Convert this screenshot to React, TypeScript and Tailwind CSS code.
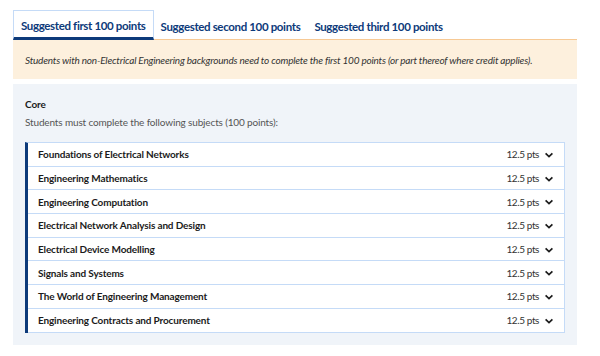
import React from "react";

const subjects = [
  "Foundations of Electrical Networks",
  "Engineering Mathematics",
  "Engineering Computation",
  "Electrical Network Analysis and Design",
  "Electrical Device Modelling",
  "Signals and Systems",
  "The World of Engineering Management",
  "Engineering Contracts and Procurement",
];

function Chevron() {
  return (
    <svg width="10" height="10" viewBox="0 0 10 10" className="ml-[5px]">
      <path d="M1.6 3.4 L5 6.6 L8.4 3.4" fill="none" stroke="#1b1b1b" strokeWidth="1.7" />
    </svg>
  );
}

export default function App() {
  return (
    <div className="w-[600px] h-[356px] bg-white" style={{ fontFamily: '"Lato", "Liberation Sans", sans-serif' }}>
      <div className="pl-[13px] pt-[10px] w-[577px]">
        <div className="flex h-[30px] border-b border-[#f7c994]">
          <div className="h-[30px] px-[7px] flex items-center border-t border-l border-r border-[#c5dbf7] border-b-[3px] border-b-[#0d3a7a] text-[11.5px] tracking-[-0.35px] font-bold text-[#0d3a7a] pt-[3px]">
            Suggested first 100 points
          </div>
          <div className="h-[29px] px-[7px] flex items-center text-[11.5px] tracking-[-0.35px] font-bold text-[#0d3a7a] pt-[4px]">
            Suggested second 100 points
          </div>
          <div className="h-[29px] px-[7px] flex items-center text-[11.5px] tracking-[-0.35px] font-bold text-[#0d3a7a] pt-[4px]">
            Suggested third 100 points
          </div>
        </div>
        <div className="h-[39px] bg-[#fdf0dd] flex items-center px-[12px] text-[10px] tracking-[-0.2px] italic text-[#333] whitespace-nowrap pt-[1px]">
          Students with non-Electrical Engineering backgrounds need to complete the first 100 points (or part thereof where credit applies).
        </div>
        <div className="mt-[5px] bg-[#f0f4f9] px-[12px] pt-[12px] pb-[12px]">
          <div className="text-[10px] tracking-[-0.1px] font-bold text-[#1b1b1b] leading-[16px]">Core</div>
          <div className="text-[10px] tracking-[-0.15px] text-[#555] leading-[16px] mt-[2px]">
            Students must complete the following subjects (100 points):
          </div>
          <div className="mt-[12px] w-[540px] border-l-[3px] border-[#0d3a7a] border-r border-r-[#c5dbf7] border-t border-t-[#c5dbf7] bg-white">
            {subjects.map((s) => (
              <div key={s} className="h-[23.7px] border-b border-[#c5dbf7] flex items-center pl-[10px] pr-[10px] pt-[1px]">
                <span className="flex-1 text-[10px] tracking-[-0.15px] font-bold text-[#1b1b1b]">{s}</span>
                <span className="text-[10px] tracking-[-0.4px] text-[#333]">12.5 pts</span>
                <Chevron />
              </div>
            ))}
          </div>
        </div>
      </div>
    </div>
  );
}
